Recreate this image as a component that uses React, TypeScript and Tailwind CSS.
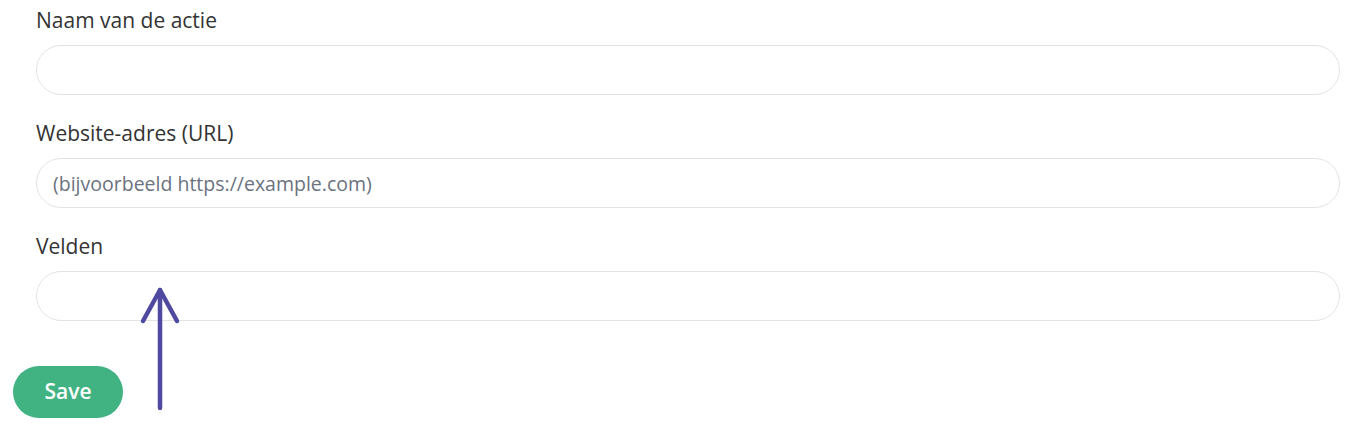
const fields = [
  { label: "Naam van de actie", placeholder: "" },
  { label: "Website-adres (URL)", placeholder: "(bijvoorbeeld https://example.com)" },
  { label: "Velden", placeholder: "" },
];

export default function App() {
  return (
    <div
      className="relative w-[1366px] h-[431px] bg-white overflow-hidden"
      style={{ fontFamily: "'Open Sans', Lato, sans-serif" }}
    >
      <div className="pt-[8px] pl-[36px] pr-[26px] flex flex-col gap-[26px]">
        {fields.map((f) => (
          <div key={f.label} className="flex flex-col">
            <label className="h-[26px] leading-[24px] text-[21px] text-[#333] mb-[11px]">
              {f.label}
            </label>
            <input
              className="h-[50px] w-full rounded-full border border-[#e3e3e3] px-[16px] text-[19.5px] text-[#333] placeholder:text-[#6b7280] outline-none"
              placeholder={f.placeholder}
            />
          </div>
        ))}
      </div>
      <div className="mt-[45px] ml-[13px]">
        <button className="h-[52px] w-[110px] rounded-full bg-[#41b383] text-white text-[21px] font-semibold">
          Save
        </button>
      </div>
      {/* annotation arrow */}
      <svg
        className="absolute left-[136px] top-[284px]"
        width="48"
        height="132"
        viewBox="0 0 48 132"
        fill="none"
        stroke="#4f49a0"
        strokeWidth="4.5"
        strokeLinecap="round"
        strokeLinejoin="round"
      >
        <path d="M24 124 V6" />
        <path d="M7 37 L24 6 L41 37" />
      </svg>
    </div>
  );
}
